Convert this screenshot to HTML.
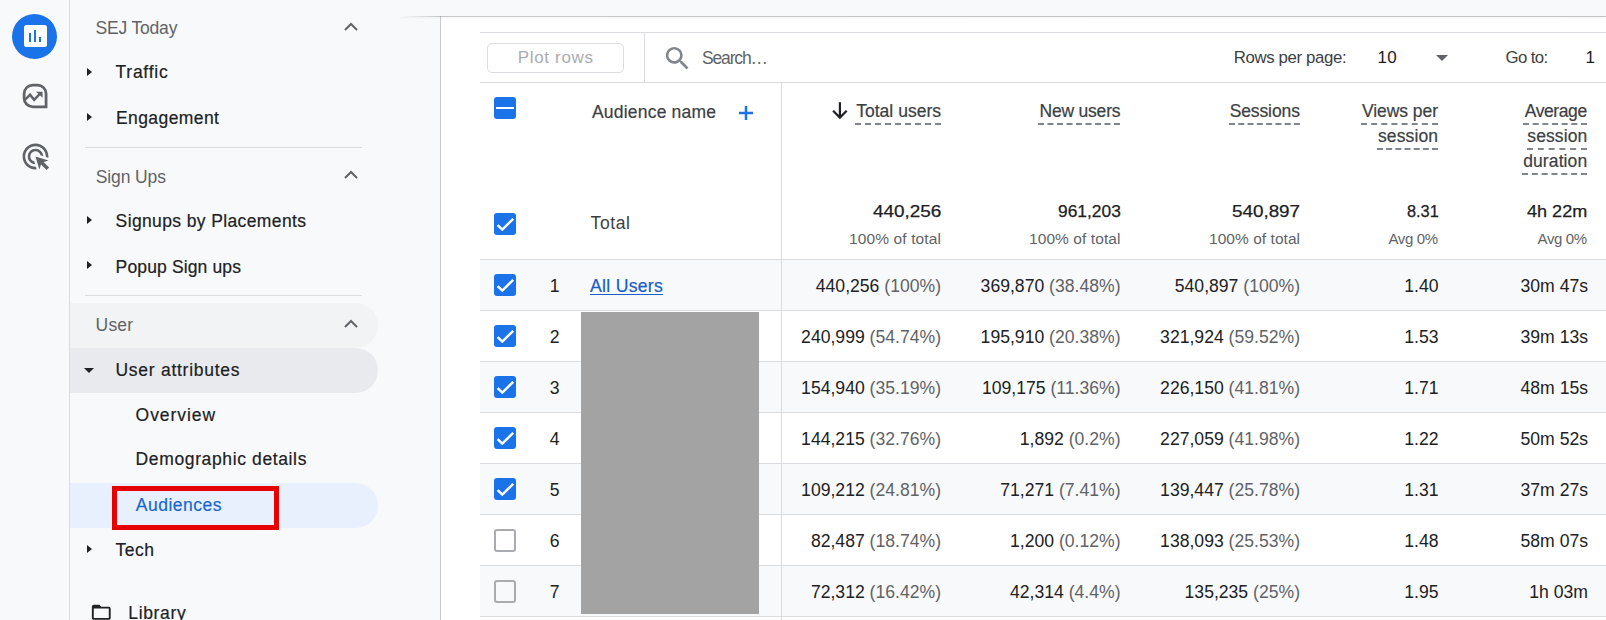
<!DOCTYPE html>
<html><head><meta charset="utf-8">
<style>
*{box-sizing:border-box}
html,body{margin:0;padding:0}
body{width:1606px;height:620px;overflow:hidden;position:relative;background:#f8f9fa;font-family:"Liberation Sans",sans-serif}
.a{position:absolute}
.t{position:absolute;white-space:pre;line-height:20px;font-family:"Liberation Sans",sans-serif}
.rail{left:0;top:0;width:70px;height:620px;border-right:1px solid #dadce0;background:#f8f9fa}
.card{left:440px;top:17px;width:1166px;height:603px;background:#fff;border-left:1px solid #c7c9cc}
.shadow{left:400px;top:16px;width:1206px;height:1px;background:linear-gradient(to right,rgba(0,0,0,0),rgba(0,0,0,.2) 40px,rgba(0,0,0,.22));box-shadow:0 1px 2px rgba(0,0,0,.06)}
.hl{height:1px;background:#dadce0}
.vl{width:1px;background:#dadce0}
.tri-r{width:0;height:0;border-top:4.8px solid transparent;border-bottom:4.8px solid transparent;border-left:5.9px solid #202124}
.tri-d{width:0;height:0;border-left:5px solid transparent;border-right:5px solid transparent;border-top:5.4px solid #202124}
.row{position:absolute;left:480px;width:1126px;height:51px;border-top:1px solid #dadce0}
.cb{position:absolute;left:494px;width:22px;height:22px;border-radius:3px}
.cb.on{background:#1a73e8}
.cb.on svg{position:absolute;left:0;top:0}
.cb.off{border:2px solid #a9abae;left:494px;width:22px;height:22.5px}
.num{color:#202124;font-family:"Liberation Sans",sans-serif}
.pc{color:#5f6368}
.link{color:#1a5dc8;text-decoration:underline;text-underline-offset:1.5px;text-decoration-thickness:1.2px;letter-spacing:0.3px;-webkit-text-stroke:0.2px #1a5dc8}
.dash{position:absolute;height:2px;border-top:2px dashed #80868b}
</style></head><body>
<!-- left rail -->
<div class="a rail"></div>
<div class="a" style="left:11.7px;top:13.7px;width:45px;height:45px;border-radius:50%;background:#1a73e8"></div>
<div class="a" style="left:23.8px;top:24.7px;width:23.1px;height:22.3px;border-radius:2.5px;background:#fff"></div>
<div class="a" style="left:29px;top:33.3px;width:2px;height:8.6px;background:#1a73e8"></div>
<div class="a" style="left:34.2px;top:30.1px;width:2px;height:11.8px;background:#1a73e8"></div>
<div class="a" style="left:39.2px;top:37.1px;width:2px;height:4.8px;background:#1a73e8"></div>
<svg class="a" style="left:20.15px;top:80.7px" width="30" height="30" viewBox="0 0 24 24">
 <path d="M10.2 3.3 H13.96 A6.9 6.9 0 0 1 20.86 10.2 V20.6 H10.2 A6.9 6.9 0 0 1 3.3 13.7 V10.2 A6.9 6.9 0 0 1 10.2 3.3 Z" fill="none" stroke="#5f6368" stroke-width="2.2" stroke-linejoin="miter"/>
 <path d="M3.9 15.2 L8.04 10.9 L11.32 15.1 L15.8 10.4" fill="none" stroke="#5f6368" stroke-width="2"/>
 <path d="M12.8 8.5 H18.05 V13.4 Z" fill="#5f6368"/>
</svg>
<svg class="a" style="left:20px;top:140.5px" width="31" height="31" viewBox="0 0 24 24">
 <path fill="#5f6368" d="M11.71,17.99C8.53,17.84,6,15.22,6,12c0-3.31,2.69-6,6-6c3.22,0,5.84,2.53,5.99,5.71l-2.1-0.63C15.48,9.31,13.89,8,12,8 c-2.21,0-4,1.79-4,4c0,1.89,1.31,3.48,3.08,3.89L11.71,17.99z M22,12c0,0.3-0.01,0.6-0.04,0.9l-1.970-0.59C20,12.21,20,12.1,20,12 c0-4.42-3.58-8-8-8s-8,3.580-8,8s3.58,8,8,8c0.1,0,0.21,0,0.31-0.01l0.59,1.97C12.6,21.99,12.3,22,12,22C6.48,22,2,17.52,2,12 C2,6.48,6.48,2,12,2S22,6.48,22,12z M18.23,16.26L22,15l-10-3l3,10l1.26-3.77l4.27,4.27l1.97-1.97L18.23,16.26z"/>
</svg>

<!-- nav panel -->
<div class="a vl" style="left:440px;top:16px;height:604px;background:#c7c9cc"></div>
<div class="a" style="left:70px;top:303px;width:308px;height:45px;background:#f1f3f4;border-radius:0 22.5px 22.5px 0"></div>
<div class="a" style="left:70px;top:348px;width:308px;height:45px;background:#e8eaed;border-radius:0 22.5px 22.5px 0"></div>
<div class="a" style="left:70px;top:483px;width:308px;height:45px;background:#e8f0fe;border-radius:0 22.5px 22.5px 0"></div>
<div class="a hl" style="left:85px;top:147px;width:277px"></div>
<div class="a hl" style="left:85px;top:295px;width:277px"></div>
<div class="a tri-r" style="left:86.8px;top:68.2px"></div>
<div class="a tri-r" style="left:86.8px;top:113px"></div>
<div class="a tri-r" style="left:86.8px;top:216.2px"></div>
<div class="a tri-r" style="left:86.8px;top:261.2px"></div>
<div class="a tri-r" style="left:86.8px;top:545.2px"></div>
<div class="a tri-d" style="left:83.9px;top:367.6px"></div>
<svg class="a" style="left:343.1px;top:21.3px" width="16" height="11" viewBox="0 0 16 11"><path d="M2 9 L8 3 L14 9" fill="none" stroke="#5f6368" stroke-width="2"/></svg>
<svg class="a" style="left:343.1px;top:169.3px" width="16" height="11" viewBox="0 0 16 11"><path d="M2 9 L8 3 L14 9" fill="none" stroke="#5f6368" stroke-width="2"/></svg>
<svg class="a" style="left:343.1px;top:318.3px" width="16" height="11" viewBox="0 0 16 11"><path d="M2 9 L8 3 L14 9" fill="none" stroke="#5f6368" stroke-width="2"/></svg>
<div class="a" style="left:112px;top:486px;width:167px;height:44px;border:5px solid #e60000"></div>
<svg class="a" style="left:90.2px;top:601.1px" width="22.56" height="22.56" viewBox="0 0 24 24"><path fill="#202124" d="M20 6h-8l-2-2H4c-1.1 0-1.99.9-1.99 2L2 18c0 1.1.9 2 2 2h16c1.1 0 2-.9 2-2V8c0-1.1-.9-2-2-2zm0 12H4V8h16v10z"/></svg>

<!-- main card -->
<div class="a card"></div>
<div class="a shadow"></div>
<div class="a hl" style="left:480px;top:32px;width:1126px"></div>
<div class="a hl" style="left:480px;top:82px;width:1126px"></div>
<div class="a vl" style="left:644px;top:33px;height:49px"></div>
<div class="a" style="left:487px;top:43px;width:137px;height:30px;border:1px solid #dadce0;border-radius:5px"></div>
<svg class="a" style="left:661.7px;top:42.5px" width="31" height="31" viewBox="0 0 24 24"><path fill="#80868b" d="M15.5 14h-.79l-.28-.27C15.41 12.59 16 11.11 16 9.5 16 5.91 13.09 3 9.5 3S3 5.91 3 9.5 5.91 16 9.5 16c1.61 0 3.09-.59 4.23-1.57l.27.28v.79l5 4.99L20.490 19l-4.990-5zm-6 0C7.01 14 5 11.99 5 9.5S7.01 5 9.5 5 14 7.01 14 9.5 11.99 14 9.5 14z"/></svg>
<div class="a" style="left:1436.3px;top:55.2px;width:0;height:0;border-left:6.6px solid transparent;border-right:6.6px solid transparent;border-top:6.2px solid #5f6368"></div>

<!-- header -->
<div class="a" style="left:494px;top:97px;width:22px;height:22px;border-radius:3px;background:#1a73e8"></div>
<div class="a" style="left:496px;top:106.8px;width:18px;height:2.4px;background:#fff"></div>
<svg class="a" style="left:738px;top:105px" width="16" height="16" viewBox="0 0 16 16"><path d="M8 1 V15 M1 8 H15" stroke="#1a73e8" stroke-width="2.5"/></svg>
<svg class="a" style="left:830px;top:102px" width="20" height="18" viewBox="0 0 20 18"><path d="M9.9 0.2 V15.2 M3.1 8.8 L9.9 15.6 L16.7 8.8" fill="none" stroke="#202124" stroke-width="2.2"/></svg>
<div class="dash" style="left:855px;top:122.8px;width:86px"></div>
<div class="dash" style="left:1038px;top:122.8px;width:82px"></div>
<div class="dash" style="left:1229px;top:122.8px;width:71px"></div>
<div class="dash" style="left:1361px;top:122.8px;width:77px"></div>
<div class="dash" style="left:1377.2px;top:147.8px;width:60.8px"></div>
<div class="dash" style="left:1522.8px;top:122.8px;width:64.2px"></div>
<div class="dash" style="left:1527px;top:147.8px;width:60px"></div>
<div class="dash" style="left:1522px;top:172.8px;width:65px"></div>

<!-- total row checkbox -->
<div class="cb on" style="top:213px"><svg width="22" height="22" viewBox="0 0 22 22"><path d="M3.6 12.2 L8.3 16.6 L19.2 5.8" fill="none" stroke="#fff" stroke-width="2.5"/></svg></div>

<div class="row" style="top:259px;background:#f8f9fa"></div>
<div class="cb on" style="top:274px"><svg width="22" height="22" viewBox="0 0 22 22"><path d="M3.6 12.2 L8.3 16.6 L19.2 5.8" fill="none" stroke="#fff" stroke-width="2.5"/></svg></div>
<div class="t num" style="left:534.7px;width:40px;text-align:center;top:275.80px;font-size:17.6px">1</div>
<div class="t link" style="left:590px;top:275.80px;font-size:17.6px">All Users</div>
<div class="t num" style="right:665.0px;top:275.80px;font-size:17.6px">440,256 <span class="pc">(100%)</span></div>
<div class="t num" style="right:485.5px;top:275.80px;font-size:17.6px">369,870 <span class="pc">(38.48%)</span></div>
<div class="t num" style="right:306.0px;top:275.80px;font-size:17.6px">540,897 <span class="pc">(100%)</span></div>
<div class="t num" style="right:167.5px;top:275.80px;font-size:17.6px">1.40</div>
<div class="t num" style="right:18.0px;top:275.80px;font-size:17.6px">30m 47s</div>
<div class="row" style="top:310px;background:#fff"></div>
<div class="cb on" style="top:325px"><svg width="22" height="22" viewBox="0 0 22 22"><path d="M3.6 12.2 L8.3 16.6 L19.2 5.8" fill="none" stroke="#fff" stroke-width="2.5"/></svg></div>
<div class="t num" style="left:534.7px;width:40px;text-align:center;top:326.80px;font-size:17.6px">2</div>
<div class="t num" style="right:665.0px;top:326.80px;font-size:17.6px">240,999 <span class="pc">(54.74%)</span></div>
<div class="t num" style="right:485.5px;top:326.80px;font-size:17.6px">195,910 <span class="pc">(20.38%)</span></div>
<div class="t num" style="right:306.0px;top:326.80px;font-size:17.6px">321,924 <span class="pc">(59.52%)</span></div>
<div class="t num" style="right:167.5px;top:326.80px;font-size:17.6px">1.53</div>
<div class="t num" style="right:18.0px;top:326.80px;font-size:17.6px">39m 13s</div>
<div class="row" style="top:361px;background:#f8f9fa"></div>
<div class="cb on" style="top:376px"><svg width="22" height="22" viewBox="0 0 22 22"><path d="M3.6 12.2 L8.3 16.6 L19.2 5.8" fill="none" stroke="#fff" stroke-width="2.5"/></svg></div>
<div class="t num" style="left:534.7px;width:40px;text-align:center;top:377.80px;font-size:17.6px">3</div>
<div class="t num" style="right:665.0px;top:377.80px;font-size:17.6px">154,940 <span class="pc">(35.19%)</span></div>
<div class="t num" style="right:485.5px;top:377.80px;font-size:17.6px">109,175 <span class="pc">(11.36%)</span></div>
<div class="t num" style="right:306.0px;top:377.80px;font-size:17.6px">226,150 <span class="pc">(41.81%)</span></div>
<div class="t num" style="right:167.5px;top:377.80px;font-size:17.6px">1.71</div>
<div class="t num" style="right:18.0px;top:377.80px;font-size:17.6px">48m 15s</div>
<div class="row" style="top:412px;background:#fff"></div>
<div class="cb on" style="top:427px"><svg width="22" height="22" viewBox="0 0 22 22"><path d="M3.6 12.2 L8.3 16.6 L19.2 5.8" fill="none" stroke="#fff" stroke-width="2.5"/></svg></div>
<div class="t num" style="left:534.7px;width:40px;text-align:center;top:428.80px;font-size:17.6px">4</div>
<div class="t num" style="right:665.0px;top:428.80px;font-size:17.6px">144,215 <span class="pc">(32.76%)</span></div>
<div class="t num" style="right:485.5px;top:428.80px;font-size:17.6px">1,892 <span class="pc">(0.2%)</span></div>
<div class="t num" style="right:306.0px;top:428.80px;font-size:17.6px">227,059 <span class="pc">(41.98%)</span></div>
<div class="t num" style="right:167.5px;top:428.80px;font-size:17.6px">1.22</div>
<div class="t num" style="right:18.0px;top:428.80px;font-size:17.6px">50m 52s</div>
<div class="row" style="top:463px;background:#f8f9fa"></div>
<div class="cb on" style="top:478px"><svg width="22" height="22" viewBox="0 0 22 22"><path d="M3.6 12.2 L8.3 16.6 L19.2 5.8" fill="none" stroke="#fff" stroke-width="2.5"/></svg></div>
<div class="t num" style="left:534.7px;width:40px;text-align:center;top:479.80px;font-size:17.6px">5</div>
<div class="t num" style="right:665.0px;top:479.80px;font-size:17.6px">109,212 <span class="pc">(24.81%)</span></div>
<div class="t num" style="right:485.5px;top:479.80px;font-size:17.6px">71,271 <span class="pc">(7.41%)</span></div>
<div class="t num" style="right:306.0px;top:479.80px;font-size:17.6px">139,447 <span class="pc">(25.78%)</span></div>
<div class="t num" style="right:167.5px;top:479.80px;font-size:17.6px">1.31</div>
<div class="t num" style="right:18.0px;top:479.80px;font-size:17.6px">37m 27s</div>
<div class="row" style="top:514px;background:#fff"></div>
<div class="cb off" style="top:529px"></div>
<div class="t num" style="left:534.7px;width:40px;text-align:center;top:530.80px;font-size:17.6px">6</div>
<div class="t num" style="right:665.0px;top:530.80px;font-size:17.6px">82,487 <span class="pc">(18.74%)</span></div>
<div class="t num" style="right:485.5px;top:530.80px;font-size:17.6px">1,200 <span class="pc">(0.12%)</span></div>
<div class="t num" style="right:306.0px;top:530.80px;font-size:17.6px">138,093 <span class="pc">(25.53%)</span></div>
<div class="t num" style="right:167.5px;top:530.80px;font-size:17.6px">1.48</div>
<div class="t num" style="right:18.0px;top:530.80px;font-size:17.6px">58m 07s</div>
<div class="row" style="top:565px;background:#f8f9fa"></div>
<div class="cb off" style="top:580px"></div>
<div class="t num" style="left:534.7px;width:40px;text-align:center;top:581.80px;font-size:17.6px">7</div>
<div class="t num" style="right:665.0px;top:581.80px;font-size:17.6px">72,312 <span class="pc">(16.42%)</span></div>
<div class="t num" style="right:485.5px;top:581.80px;font-size:17.6px">42,314 <span class="pc">(4.4%)</span></div>
<div class="t num" style="right:306.0px;top:581.80px;font-size:17.6px">135,235 <span class="pc">(25%)</span></div>
<div class="t num" style="right:167.5px;top:581.80px;font-size:17.6px">1.95</div>
<div class="t num" style="right:18.0px;top:581.80px;font-size:17.6px">1h 03m</div>
<div class="a hl" style="left:480px;top:616px;width:1126px"></div>
<div class="a vl" style="left:781px;top:83px;height:537px"></div>
<div class="a" style="left:581px;top:312px;width:178px;height:301.5px;background:#a3a3a3"></div>

<div class="t" id="t0" style="left:95.5px;top:17.84px;font-size:17.5px;font-weight:400;color:#5f6368;letter-spacing:-0.180px;">SEJ Today</div>
<div class="t" id="t1" style="left:115.5px;top:62.34px;font-size:17.5px;font-weight:400;color:#202124;letter-spacing:0.757px;-webkit-text-stroke:0.2px #202124;">Traffic</div>
<div class="t" id="t2" style="left:115.9px;top:107.74px;font-size:17.5px;font-weight:400;color:#202124;letter-spacing:0.428px;-webkit-text-stroke:0.2px #202124;">Engagement</div>
<div class="t" id="t3" style="left:95.7px;top:166.54px;font-size:17.5px;font-weight:400;color:#5f6368;letter-spacing:-0.117px;">Sign Ups</div>
<div class="t" id="t4" style="left:115.6px;top:211.44px;font-size:17.5px;font-weight:400;color:#202124;letter-spacing:0.375px;-webkit-text-stroke:0.2px #202124;">Signups by Placements</div>
<div class="t" id="t5" style="left:115.6px;top:256.54px;font-size:17.5px;font-weight:400;color:#202124;letter-spacing:0.140px;-webkit-text-stroke:0.2px #202124;">Popup Sign ups</div>
<div class="t" id="t6" style="left:95.6px;top:314.74px;font-size:17.5px;font-weight:400;color:#5f6368;letter-spacing:0.149px;">User</div>
<div class="t" id="t7" style="left:115.5px;top:360.24px;font-size:17.5px;font-weight:400;color:#202124;letter-spacing:0.729px;-webkit-text-stroke:0.2px #202124;">User attributes</div>
<div class="t" id="t8" style="left:135.6px;top:404.84px;font-size:17.5px;font-weight:400;color:#202124;letter-spacing:0.952px;-webkit-text-stroke:0.2px #202124;">Overview</div>
<div class="t" id="t9" style="left:135.6px;top:449.44px;font-size:17.5px;font-weight:400;color:#202124;letter-spacing:0.626px;-webkit-text-stroke:0.2px #202124;">Demographic details</div>
<div class="t" id="t10" style="left:135.8px;top:494.74px;font-size:17.5px;font-weight:400;color:#1967d2;letter-spacing:0.496px;-webkit-text-stroke:0.2px #1967d2;">Audiences</div>
<div class="t" id="t11" style="left:115.6px;top:540.04px;font-size:17.5px;font-weight:400;color:#202124;letter-spacing:0.477px;-webkit-text-stroke:0.2px #202124;">Tech</div>
<div class="t" id="t12" style="left:128.3px;top:602.74px;font-size:17.5px;font-weight:400;color:#202124;letter-spacing:0.650px;-webkit-text-stroke:0.2px #202124;">Library</div>
<div class="t" id="t13" style="left:517.8px;top:47.91px;font-size:17px;font-weight:400;color:#a9acb0;letter-spacing:0.660px;">Plot rows</div>
<div class="t" id="t14" style="left:702.0px;top:47.74px;font-size:17.5px;font-weight:400;color:#5f6368;letter-spacing:-1.159px;">Search…</div>
<div class="t" id="t15" style="left:1233.7px;top:48.18px;font-size:16.8px;font-weight:400;color:#3c4043;letter-spacing:-0.350px;">Rows per page:</div>
<div class="t" id="t16" style="left:1377.5px;top:47.71px;font-size:17px;font-weight:400;color:#202124;letter-spacing:0.278px;">10</div>
<div class="t" id="t17" style="left:1505.6px;top:48.18px;font-size:16.8px;font-weight:400;color:#3c4043;letter-spacing:-0.644px;">Go to:</div>
<div class="t" id="t18" style="left:1585.4px;top:47.71px;font-size:17px;font-weight:400;color:#202124;letter-spacing:0.000px;">1</div>
<div class="t" id="t19" style="left:592.0px;top:101.54px;font-size:17.5px;font-weight:400;color:#3c4043;letter-spacing:0.198px;-webkit-text-stroke:0.2px #3c4043;">Audience name</div>
<div class="t" id="t20" style="left:856.2px;top:100.54px;font-size:17.5px;font-weight:400;color:#3c4043;letter-spacing:0.027px;-webkit-text-stroke:0.2px #3c4043;">Total users</div>
<div class="t" id="t21" style="left:1039.6px;top:100.74px;font-size:17.5px;font-weight:400;color:#3c4043;letter-spacing:-0.221px;-webkit-text-stroke:0.2px #3c4043;">New users</div>
<div class="t" id="t22" style="left:1229.7px;top:100.54px;font-size:17.5px;font-weight:400;color:#3c4043;letter-spacing:-0.117px;-webkit-text-stroke:0.2px #3c4043;">Sessions</div>
<div class="t" id="t23" style="left:1362.0px;top:100.54px;font-size:17.5px;font-weight:400;color:#3c4043;letter-spacing:-0.066px;-webkit-text-stroke:0.2px #3c4043;">Views per</div>
<div class="t" id="t24" style="left:1378.0px;top:125.54px;font-size:17.5px;font-weight:400;color:#3c4043;letter-spacing:0.109px;-webkit-text-stroke:0.2px #3c4043;">session</div>
<div class="t" id="t25" style="left:1524.7px;top:100.54px;font-size:17.5px;font-weight:400;color:#3c4043;letter-spacing:-0.396px;-webkit-text-stroke:0.2px #3c4043;">Average</div>
<div class="t" id="t26" style="left:1527.3px;top:125.54px;font-size:17.5px;font-weight:400;color:#3c4043;letter-spacing:0.093px;-webkit-text-stroke:0.2px #3c4043;">session</div>
<div class="t" id="t27" style="left:1523.2px;top:150.64px;font-size:17.5px;font-weight:400;color:#3c4043;letter-spacing:0.107px;-webkit-text-stroke:0.2px #3c4043;">duration</div>
<div class="t" id="t28" style="left:590.6px;top:212.84px;font-size:17.5px;font-weight:400;color:#3c4043;letter-spacing:0.583px;">Total</div>
<div class="t" id="t29" style="left:873.0px;top:201.75px;font-size:16.6px;font-weight:400;color:#202124;letter-spacing:0.000px;-webkit-text-stroke:0.25px #202124;transform-origin:0 0;transform:scaleX(1.1393);">440,256</div>
<div class="t" id="t30" style="left:1058.0px;top:201.75px;font-size:16.6px;font-weight:400;color:#202124;letter-spacing:0.000px;-webkit-text-stroke:0.25px #202124;transform-origin:0 0;transform:scaleX(1.0472);">961,203</div>
<div class="t" id="t31" style="left:1232.3px;top:201.75px;font-size:16.6px;font-weight:400;color:#202124;letter-spacing:0.000px;-webkit-text-stroke:0.25px #202124;transform-origin:0 0;transform:scaleX(1.1343);">540,897</div>
<div class="t" id="t32" style="left:1406.5px;top:201.75px;font-size:16.6px;font-weight:400;color:#202124;letter-spacing:0.000px;-webkit-text-stroke:0.25px #202124;transform-origin:0 0;transform:scaleX(0.9845);">8.31</div>
<div class="t" id="t33" style="left:1527.3px;top:201.75px;font-size:16.6px;font-weight:400;color:#202124;letter-spacing:0.000px;-webkit-text-stroke:0.25px #202124;transform-origin:0 0;transform:scaleX(1.0879);">4h 22m</div>
<div class="t" id="t34" style="left:849.0px;top:228.93px;font-size:15.5px;font-weight:400;color:#5f6368;letter-spacing:0.126px;">100% of total</div>
<div class="t" id="t35" style="left:1029.0px;top:228.93px;font-size:15.5px;font-weight:400;color:#5f6368;letter-spacing:0.085px;">100% of total</div>
<div class="t" id="t36" style="left:1209.0px;top:228.93px;font-size:15.5px;font-weight:400;color:#5f6368;letter-spacing:0.043px;">100% of total</div>
<div class="t" id="t37" style="left:1388.4px;top:229.10px;font-size:15px;font-weight:400;color:#5f6368;letter-spacing:-0.368px;">Avg 0%</div>
<div class="t" id="t38" style="left:1537.6px;top:229.10px;font-size:15px;font-weight:400;color:#5f6368;letter-spacing:-0.367px;">Avg 0%</div>
</body></html>
